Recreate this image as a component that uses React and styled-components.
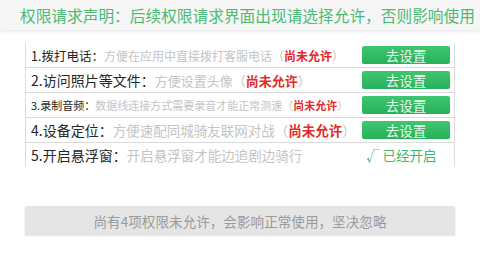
import React from 'react';
import styled, { createGlobalStyle } from 'styled-components';

const GlobalStyle = createGlobalStyle`
  html, body {
    margin: 0;
    padding: 0;
    background: #ffffff;
  }
  body {
    font-family: "Noto Sans CJK SC", "Noto Sans", "Liberation Sans", sans-serif;
  }
`;

const Page = styled.div`
  width: 480px;
  height: 270px;
  overflow: hidden;
  background: #fff;
`;

const Header = styled.div`
  height: 30px;
  display: flex;
  align-items: center;
  padding-left: 20px;
  background: #f6f6f6;
  box-shadow: 0 1px 3px rgba(0, 0, 0, 0.12);
  color: #4cba72;
  font-size: 15.7px;
  white-space: nowrap;
`;

const Table = styled.div`
  margin: 13px 25px 0 25px;
  border-left: 1px solid #dcdcdc;
  border-right: 1px solid #dcdcdc;
`;

const Row = styled.div`
  height: 24px;
  display: flex;
  align-items: center;
  padding: 0 4px 0 5px;
  border-bottom: ${p => (p.$last ? 'none' : '1px solid #dadada')};
  white-space: nowrap;
`;

const Title = styled.span`
  color: #262626;
  font-size: ${p => p.$size}px;
`;

const Desc = styled.span`
  color: #c4c4c4;
  font-size: ${p => p.$size}px;
`;

const Denied = styled.span`
  color: #e32a2a;
  font-weight: 700;
`;

const SetButton = styled.button`
  margin-left: auto;
  width: 88px;
  height: 18px;
  padding: 0;
  border: none;
  border-radius: 2px;
  background: linear-gradient(#3fc76f, #27b15b);
  color: #e9f9ef;
  font-family: inherit;
  font-size: 13.5px;
  line-height: 18px;
`;

const Enabled = styled.span`
  margin-left: auto;
  width: 84px;
  color: #3db96b;
  font-size: 13.5px;
`;

const IgnoreButton = styled.button`
  display: block;
  margin: 39px 25px 0 25px;
  width: 430px;
  height: 29px;
  border: none;
  border-radius: 1px;
  background: #e5e5e5;
  box-shadow: 0 1px 2px rgba(0, 0, 0, 0.12);
  color: #9a9a9a;
  font-family: inherit;
  font-size: 13.6px;
`;

const permissions = [
  { title: '1.拨打电话', desc: '方便在应用中直接拨打客服电话', size: 12.5, descSize: 12 },
  { title: '2.访问照片等文件', desc: '方便设置头像', size: 14, descSize: 13 },
  { title: '3.录制音频', desc: '数据线连接方式需要录音才能正常测速', size: 11, descSize: 11 },
  { title: '4.设备定位', desc: '方便速配同城骑友联网对战', size: 14, descSize: 13.5 },
  { title: '5.开启悬浮窗', desc: '开启悬浮窗才能边追剧边骑行', size: 14, descSize: 13.5, granted: true },
];

export default function App() {
  return (
    <Page>
      <GlobalStyle />
      <Header>权限请求声明：后续权限请求界面出现请选择允许，否则影响使用</Header>
      <Table>
        {permissions.map((p, i) => (
          <Row key={p.title} $last={i === permissions.length - 1}>
            <Title $size={p.size}>{p.title}：</Title>
            <Desc $size={p.descSize}>
              {p.desc}
              {!p.granted && (
                <>
                  （<Denied>尚未允许</Denied>）
                </>
              )}
            </Desc>
            {p.granted ? <Enabled>√ 已经开启</Enabled> : <SetButton>去设置</SetButton>}
          </Row>
        ))}
      </Table>
      <IgnoreButton>尚有4项权限未允许，会影响正常使用，坚决忽略</IgnoreButton>
    </Page>
  );
}
